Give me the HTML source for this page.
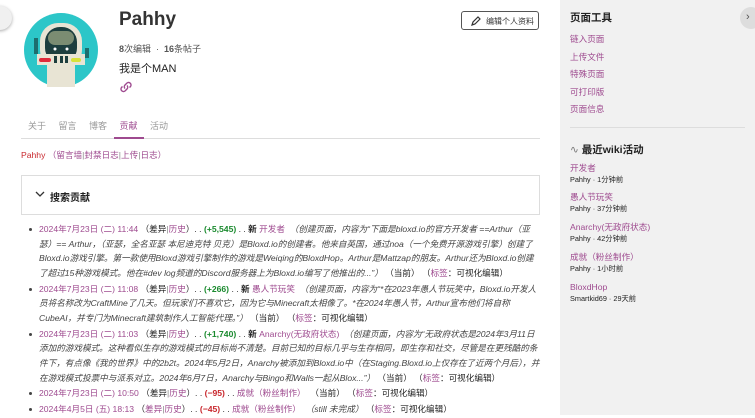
<!DOCTYPE html>
<html><head><meta charset="utf-8"><style>
*{margin:0;padding:0;box-sizing:border-box}
body{width:755px;height:415px;overflow:hidden;background:#fff;font-family:"Liberation Sans","Noto Sans CJK SC",sans-serif;color:#222;position:relative}
.a{position:absolute;white-space:nowrap}
.p{color:#9e4a8f}
.side{position:absolute;left:560px;top:0;width:195px;height:415px;background:#f1f1f1}
ul{position:absolute;left:28px;top:222px;width:514px;list-style:none;font-size:8.6px;line-height:14.6px}
li{position:relative;padding-left:11px;margin-bottom:1.3px}
li:before{content:"";position:absolute;left:1px;top:6px;width:3px;height:3px;background:#444;border-radius:50%}
i{color:#444}
.g{color:#1a8a2e;font-weight:bold}.r{color:#c8262c;font-weight:bold}
.t{color:#888}
</style></head><body>
<div class="a" style="left:-12px;top:6px;width:24px;height:24px;border-radius:50%;background:#f0f0f0;box-shadow:0 1px 3px #aaa"></div>
<svg class="a" style="left:24px;top:13px" width="75" height="75" viewBox="0 0 75 75">
<circle cx="37" cy="37" r="37" fill="#2cc6c8"/>
<rect x="16" y="10" width="42" height="45" rx="18" fill="#e8e4d4"/>
<rect x="21" y="14" width="32" height="36" rx="15" fill="#1d3e3e"/>
<rect x="24" y="18" width="26" height="14" rx="7" fill="#7b8c72"/>
<circle cx="31" cy="36" r="1.5" fill="#fff"/><circle cx="43" cy="36" r="1.5" fill="#fff"/>
<rect x="13" y="41" width="48" height="11" fill="#e8e4d4"/>
<rect x="15" y="45" width="12" height="4" rx="2" fill="#e02a3a"/>
<rect x="47" y="45" width="10" height="4" rx="2" fill="#d8e23a"/>
<rect x="30" y="43" width="3" height="7" fill="#1d3e3e"/><rect x="36" y="43" width="3" height="7" fill="#1d3e3e"/><rect x="41" y="43" width="3" height="7" fill="#1d3e3e"/>
<rect x="23" y="52" width="28" height="22" fill="#e8e4d4"/>
<rect x="10" y="25" width="4" height="16" fill="#1d6e6e"/><rect x="61" y="35" width="4" height="10" fill="#1d6e6e"/>
</svg>
<div class="a" style="left:119px;top:9px;font-size:19px;font-weight:bold;color:#333">Pahhy</div>
<div class="a" style="left:119px;top:42px;font-size:9px;color:#555"><b>8</b>次编辑 &nbsp;· &nbsp;<b>16</b>条帖子</div>
<div class="a" style="left:119px;top:60px;font-size:11px;color:#222">我是个MAN</div>
<svg class="a" style="left:119px;top:80px" width="14" height="14" viewBox="0 0 14 14" fill="none" stroke="#9e4a8f" stroke-width="1.4"><path d="M6 8.5a2.5 2.5 0 0 1 0-3.5l2-2a2.5 2.5 0 0 1 3.5 3.5l-1 1M8 5.5a2.5 2.5 0 0 1 0 3.5l-2 2a2.5 2.5 0 0 1-3.5-3.5l1-1"/></svg>
<div class="a" style="left:461px;top:11px;width:78px;height:19px;border:1px solid #555;border-radius:3px;font-size:8px;color:#333;padding:4px 0 0 24px">编辑个人资料</div>
<svg class="a" style="left:470px;top:15px" width="12" height="12" viewBox="0 0 12 12" fill="none" stroke="#333" stroke-width="1.2"><path d="M2 10l1-3 5-5 2 2-5 5z"/></svg>
<div class="a" style="left:28px;top:119px;font-size:9px;color:#999">关于&nbsp;&nbsp;&nbsp;&nbsp;&nbsp;留言&nbsp;&nbsp;&nbsp;&nbsp;&nbsp;博客&nbsp;&nbsp;&nbsp;&nbsp;&nbsp;<span class="p">贡献</span>&nbsp;&nbsp;&nbsp;&nbsp;&nbsp;活动</div>
<div class="a" style="left:21px;top:138px;width:519px;height:1px;background:#ddd"></div>
<div class="a" style="left:114px;top:137px;width:30px;height:2px;background:#9e4a8f"></div>
<div class="a" style="left:21px;top:149px;font-size:8.6px"><span style="color:#c8262c">Pahhy</span> <span class="p">（留言墙<span class="t">|</span>封禁日志<span class="t">|</span>上传<span class="t">|</span>日志）</span></div>
<div class="a" style="left:21px;top:175px;width:519px;height:40px;border:1px solid #ddd"></div>
<svg class="a" style="left:35px;top:191px" width="10" height="7" viewBox="0 0 10 7" fill="none" stroke="#333" stroke-width="1.3"><path d="M1 1l4 4 4-4"/></svg>
<div class="a" style="left:50px;top:189px;font-size:10px;font-weight:bold">搜索贡献</div>
<ul>
<li><span class="p">2024年7月23日 (二) 11:44</span> （差异<span class="t">|</span><span class="p">历史</span>）. . <span class="g">(+5,545)</span> . . <b>新</b> <span class="p">开发者</span> &nbsp;<i>（创建页面，内容为“下面是bloxd.io的官方开发者 ==Arthur（亚瑟）== Arthur，（亚瑟，全名亚瑟 本尼迪克特 贝克）是Bloxd.io的创建者。他来自英国，通过noa（一个免费开源游戏引擎）创建了Bloxd.io游戏引擎。第一款使用Bloxd游戏引擎制作的游戏是Weiqing的BloxdHop。Arthur是Mattzap的朋友。Arthur还为Bloxd.io创建了超过15种游戏模式。他在#dev log频道的Discord服务器上为Bloxd.io编写了他推出的...”）</i> （当前） （<span class="p">标签</span>：可视化编辑）</li>
<li><span class="p">2024年7月23日 (二) 11:08</span> （差异<span class="t">|</span><span class="p">历史</span>）. . <span class="g">(+266)</span> . . <b>新</b> <span class="p">愚人节玩笑</span> &nbsp;<i>（创建页面，内容为“*在2023年愚人节玩笑中，Bloxd.io开发人员将名称改为CraftMine了几天。但玩家们不喜欢它，因为它与Minecraft太相像了。*在2024年愚人节，Arthur宣布他们将自称CubeAI，并专门为Minecraft建筑制作人工智能代理。”）</i> （当前） （<span class="p">标签</span>：可视化编辑）</li>
<li><span class="p">2024年7月23日 (二) 11:03</span> （差异<span class="t">|</span><span class="p">历史</span>）. . <span class="g">(+1,740)</span> . . <b>新</b> <span class="p">Anarchy(无政府状态)</span> &nbsp;<i>（创建页面，内容为“无政府状态是2024年3月11日添加的游戏模式。这种看似生存的游戏模式的目标尚不清楚。目前已知的目标几乎与生存相同，即生存和社交，尽管是在更残酷的条件下，有点像《我的世界》中的2b2t。2024年5月2日，Anarchy被添加到Bloxd.io中（在Staging.Bloxd.io上仅存在了近两个月后），并在游戏模式投票中与派系对立。2024年6月7日，Anarchy与Bingo和Walls一起从Blox...”）</i> （当前） （<span class="p">标签</span>：可视化编辑）</li>
<li><span class="p">2024年7月23日 (二) 10:50</span> （差异<span class="t">|</span><span class="p">历史</span>）. . <span class="r">(−95)</span> . . <span class="p">成就（粉丝制作）</span> &nbsp;（当前） （<span class="p">标签</span>：可视化编辑）</li>
<li><span class="p">2024年4月5日 (五) 18:13</span> （<span class="p">差异</span><span class="t">|</span><span class="p">历史</span>）. . <span class="r">(−45)</span> . . <span class="p">成就（粉丝制作）</span> &nbsp;<i>（still 未完成）</i> （<span class="p">标签</span>：可视化编辑）</li>
</ul>
<div class="side">
<div class="a" style="left:10px;top:10px;font-size:10.5px;font-weight:bold">页面工具</div>
<div class="a p" style="left:10px;top:31px;font-size:8.6px;line-height:17.5px">链入页面<br>上传文件<br>特殊页面<br>可打印版<br>页面信息</div>
<div class="a" style="left:10px;top:127px;width:175px;height:1px;background:#ddd"></div>
<div class="a" style="left:10px;top:142px;font-size:10.5px;font-weight:bold"><span style="font-weight:normal;color:#777">∿</span> 最近wiki活动</div>
<div class="a" style="left:10px;top:163px;font-size:8.6px;line-height:11px"><span class="p">开发者</span><br><span style="font-size:7.3px">Pahhy · 1分钟前</span></div>
<div class="a" style="left:10px;top:192px;font-size:8.6px;line-height:11px"><span class="p">愚人节玩笑</span><br><span style="font-size:7.3px">Pahhy · 37分钟前</span></div>
<div class="a" style="left:10px;top:222px;font-size:8.6px;line-height:11px"><span class="p">Anarchy(无政府状态)</span><br><span style="font-size:7.3px">Pahhy · 42分钟前</span></div>
<div class="a" style="left:10px;top:252px;font-size:8.6px;line-height:11px"><span class="p">成就（粉丝制作）</span><br><span style="font-size:7.3px">Pahhy · 1小时前</span></div>
<div class="a" style="left:10px;top:282px;font-size:8.6px;line-height:11px"><span class="p">BloxdHop</span><br><span style="font-size:7.3px">Smartkid69 · 29天前</span></div>
<div class="a" style="left:180px;top:7px;width:22px;height:22px;border-radius:50%;background:#ddd;font-size:11px;padding:4px 0 0 6px;color:#555">›</div>
</div>
</body></html>
